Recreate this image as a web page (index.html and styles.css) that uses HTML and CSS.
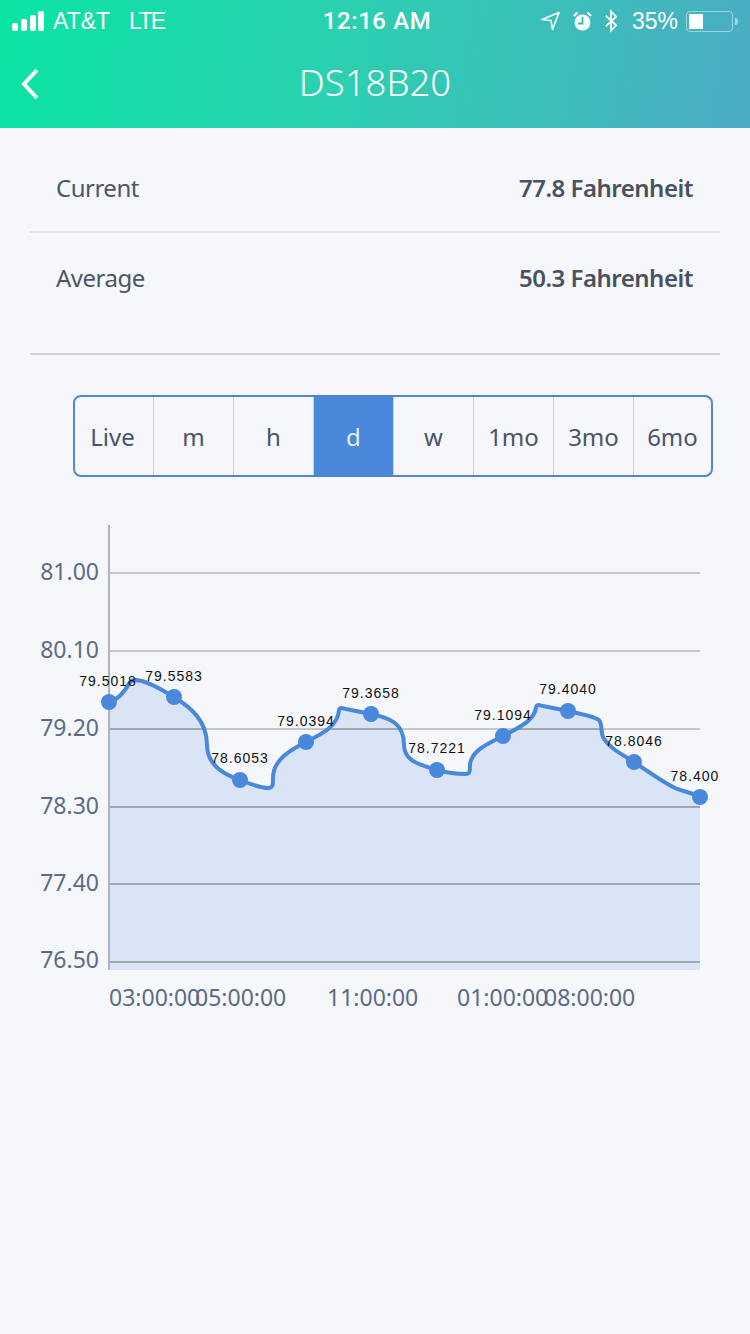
FILE: index.html
```html
<!DOCTYPE html>
<html lang="en">
<head>
    <meta charset="UTF-8">
    <meta name="viewport" content="width=device-width, initial-scale=1.0">
    <title>DS18B20</title>
    <link rel="stylesheet" href="styles.css">
</head>
<body>
    <header class="header">
        <div class="status-bar">
            <div class="status-left">
                <svg class="signal" width="36" height="20" viewBox="0 0 36 20">
                    <rect x="0" y="12" width="6" height="8" rx="2"/>
                    <rect x="9" y="8" width="6" height="12" rx="2"/>
                    <rect x="18" y="4" width="6" height="16" rx="2"/>
                    <rect x="26" y="0" width="6" height="20" rx="2"/>
                </svg>
                <span class="carrier">AT&amp;T</span>
                <span class="network">LTE</span>
            </div>
            <div class="status-time">12:16 AM</div>
            <div class="status-right">
                <svg width="21" height="21" viewBox="0 0 21 21">
                    <path d="M19 1.5 L2 8.5 L11 9.5 L12.5 18.5 Z" fill="none" stroke="#fff" stroke-width="1.6" stroke-linejoin="round"/>
                </svg>
                <svg width="19" height="22" viewBox="0 0 19 22">
                    <circle cx="9.5" cy="12.5" r="8" fill="#fff"/>
                    <path d="M9.5 7 V13.5 H5" fill="none" stroke="#33bdb9" stroke-width="1.8"/>
                    <path d="M1 6 L4.5 2.5 M18 6 L14.5 2.5" stroke="#fff" stroke-width="2.2"/>
                </svg>
                <svg width="14" height="24" viewBox="0 0 16 26">
                    <path d="M2 7 L14 18 L8 24 V2 L14 8 L2 19" fill="none" stroke="#fff" stroke-width="2"/>
                </svg>
                <span class="battery-pct">35%</span>
                <div class="battery">
                    <div class="battery-level"></div>
                </div>
                <div class="battery-tip"></div>
            </div>
        </div>
        <div class="nav-bar">
            <svg class="back" width="22" height="34" viewBox="0 0 22 34">
                <path d="M17 3 L4 17 L17 31" fill="none" stroke="#fff" stroke-width="4"/>
            </svg>
            <h1 class="title">DS18B20</h1>
        </div>
    </header>

    <section class="info">
        <div class="info-row">
            <span>Current</span>
            <strong>77.8 Fahrenheit</strong>
        </div>
        <div class="info-row info-row-tall">
            <span>Average</span>
            <strong>50.3 Fahrenheit</strong>
        </div>
    </section>

    <nav class="ranges">
        <div class="range range-first">Live</div>
        <div class="range">m</div>
        <div class="range">h</div>
        <div class="range active">d</div>
        <div class="range">w</div>
        <div class="range">1mo</div>
        <div class="range">3mo</div>
        <div class="range">6mo</div>
    </nav>

    <svg class="chart" width="750" height="500" viewBox="0 520 750 500">
        <defs>
            <clipPath id="underLine">
                <path d="M109 702 C118 700 124 693 130 682 C133 679 137 680 142 681 C153 684 164 691 174 697 C190 707 207 720 207 745 C207 765 225 775 240 780 C250 784 262 788 268 788 C273 788 273 785 273 778 C273 760 290 750 306 742 C322 734 338 726 339 710 C340 707 342 708 346 709 L371 714 C390 718 404 723 404 745 C404 762 422 765 437 770 C448 773 458 774 465 774 C470 774 470 772 470 764 C472 750 488 744 503 736 C520 727 535 720 536 707 C537 704 539 705 543 706 L568 711 C580 714 594 716 599 720 C603 725 600 733 604 739 C612 750 622 754 634 762 C650 773 665 783 675 788 C685 792 692 793 700 797 L700 970 L109 970 Z"/>
            </clipPath>
            <g id="gridLines">
                <line x1="109" y1="573" x2="700" y2="573"/>
                <line x1="109" y1="651" x2="700" y2="651"/>
                <line x1="109" y1="729" x2="700" y2="729"/>
                <line x1="109" y1="807" x2="700" y2="807"/>
                <line x1="109" y1="884" x2="700" y2="884"/>
                <line x1="109" y1="962" x2="700" y2="962"/>
            </g>
        </defs>
        <!-- area under the line, grid is darker inside it -->
        <rect class="area" x="109" y="670" width="591" height="300" clip-path="url(#underLine)"/>
        <use class="grid" href="#gridLines"/>
        <use class="grid grid-under" href="#gridLines" clip-path="url(#underLine)"/>
        <line class="axis" x1="109" y1="525" x2="109" y2="970"/>
        <g class="axis-text y-labels">
            <text x="99" y="580">81.00</text>
            <text x="99" y="658">80.10</text>
            <text x="99" y="736">79.20</text>
            <text x="99" y="814">78.30</text>
            <text x="99" y="891">77.40</text>
            <text x="99" y="968">76.50</text>
        </g>
        <g class="axis-text">
            <text x="109" y="1006">03:00:00</text>
            <text x="195" y="1006">05:00:00</text>
            <text x="327" y="1006">11:00:00</text>
            <text x="457" y="1006">01:00:00</text>
            <text x="544" y="1006">08:00:00</text>
        </g>
        <path class="line" d="M109 702 C118 700 124 693 130 682 C133 679 137 680 142 681 C153 684 164 691 174 697 C190 707 207 720 207 745 C207 765 225 775 240 780 C250 784 262 788 268 788 C273 788 273 785 273 778 C273 760 290 750 306 742 C322 734 338 726 339 710 C340 707 342 708 346 709 L371 714 C390 718 404 723 404 745 C404 762 422 765 437 770 C448 773 458 774 465 774 C470 774 470 772 470 764 C472 750 488 744 503 736 C520 727 535 720 536 707 C537 704 539 705 543 706 L568 711 C580 714 594 716 599 720 C603 725 600 733 604 739 C612 750 622 754 634 762 C650 773 665 783 675 788 C685 792 692 793 700 797"/>
        <g class="dots">
            <circle cx="109" cy="702" r="8"/>
            <circle cx="174" cy="697" r="8"/>
            <circle cx="240" cy="780" r="8"/>
            <circle cx="306" cy="742" r="8"/>
            <circle cx="371" cy="714" r="8"/>
            <circle cx="437" cy="770" r="8"/>
            <circle cx="503" cy="736" r="8"/>
            <circle cx="568" cy="711" r="8"/>
            <circle cx="634" cy="762" r="8"/>
            <circle cx="700" cy="797" r="8"/>
        </g>
        <g class="point-labels">
            <text x="108" y="686">79.5018</text>
            <text x="174" y="681">79.5583</text>
            <text x="240" y="763">78.6053</text>
            <text x="306" y="726">79.0394</text>
            <text x="371" y="698">79.3658</text>
            <text x="437" y="753">78.7221</text>
            <text x="503" y="720">79.1094</text>
            <text x="568" y="694">79.4040</text>
            <text x="634" y="746">78.8046</text>
            <text x="695" y="781">78.400</text>
        </g>
    </svg>
</body>
</html>
```

FILE: styles.css
```css
body {
    margin: 0;
    background-color: #f5f7fb;
    font-family: "Noto Sans", sans-serif;
    color: #4a5468;
}

.header {
    height: 128px;
    background: linear-gradient(100deg, #0ae4a4 0%, #2bd0b0 45%, #4bacc4 100%);
    color: #fff;
}

.status-bar {
    display: grid;
    grid-template-columns: 1fr auto 1fr;
    align-items: center;
    height: 42px;
    padding: 0 12px;
    font-family: "Liberation Sans", sans-serif;
    font-size: 23px;
}

.status-left {
    display: flex;
    align-items: center;
}

.signal {
    fill: #fff;
    margin-right: 5px;
}

.network {
    margin-left: 19px;
    letter-spacing: -1.7px;
}

.status-time {
    margin-left: 4px;
    font-family: Roboto, sans-serif;
    font-size: 24px;
    font-weight: 500;
    letter-spacing: 0.6px;
}

.status-right {
    display: flex;
    align-items: center;
    justify-content: flex-end;
    gap: 12px;
}

.battery-pct {
    margin-left: 2px;
}

.battery {
    width: 47px;
    height: 21px;
    margin-left: -4px;
    padding: 2px 1.5px;
    box-sizing: border-box;
    border: 1.5px solid rgba(255, 255, 255, 0.45);
    border-radius: 4px;
}

.battery-level {
    width: 14px;
    height: 100%;
    background-color: #fff;
}

.battery-tip {
    width: 3px;
    height: 7px;
    margin-left: -10px;
    background-color: rgba(255, 255, 255, 0.5);
    border-radius: 0 3px 3px 0;
}

.nav-bar {
    position: relative;
    display: flex;
    align-items: center;
    justify-content: center;
    height: 84px;
}

.back {
    position: absolute;
    left: 20px;
    top: 25px;
}

.title {
    margin: -4px 0 0;
    font-size: 36.5px;
    font-weight: 300;
}

.info {
    margin: 0 30px;
}

.info-row {
    display: flex;
    justify-content: space-between;
    align-items: flex-start;
    height: 105px;
    padding: 43px 27px 0 26px;
    box-sizing: border-box;
    border-bottom: 2px solid #e1e3e9;
    font-size: 24px;
    letter-spacing: -0.5px;
    color: #4f5663;
}

.info-row strong {
    font-weight: 600;
    color: #4a5160;
}

.info-row-tall {
    height: 122px;
    padding-top: 28px;
    border-bottom-color: #cfd1d9;
}

.ranges {
    display: grid;
    grid-template-columns: 78px repeat(6, 80px) 78px;
    width: 640px;
    height: 82px;
    margin: 40px 0 0 73px;
    box-sizing: border-box;
    border: 2px solid #5288cb;
    border-radius: 8px;
    overflow: hidden;
}

.range {
    display: flex;
    align-items: center;
    justify-content: center;
    border-left: 1px solid #ccd0d8;
    font-size: 24px;
    color: #4a5468;
}

.range-first {
    border-left: none;
    padding-right: 3px;
}

.range.active {
    background-color: #4a88dc;
    color: #e8f0fb;
}

.chart {
    display: block;
    margin-top: 43px;
}

.area {
    fill: #d9e5f7;
}

.grid {
    stroke: #b5b7bd;
    stroke-width: 1.5;
}

.grid-under {
    stroke: #959cac;
}

.axis {
    stroke: #b0b3bb;
    stroke-width: 2;
}

.axis-text {
    font-family: "Noto Sans", sans-serif;
    font-size: 23px;
    fill: #5d6b85;
}

.y-labels {
    text-anchor: end;
}

.line {
    fill: none;
    stroke: #4a88dc;
    stroke-width: 4;
}

.dots {
    fill: #4a88dc;
}

.point-labels {
    font-family: "Liberation Sans", sans-serif;
    font-size: 14px;
    letter-spacing: 1px;
    text-anchor: middle;
    fill: #111;
}
```
